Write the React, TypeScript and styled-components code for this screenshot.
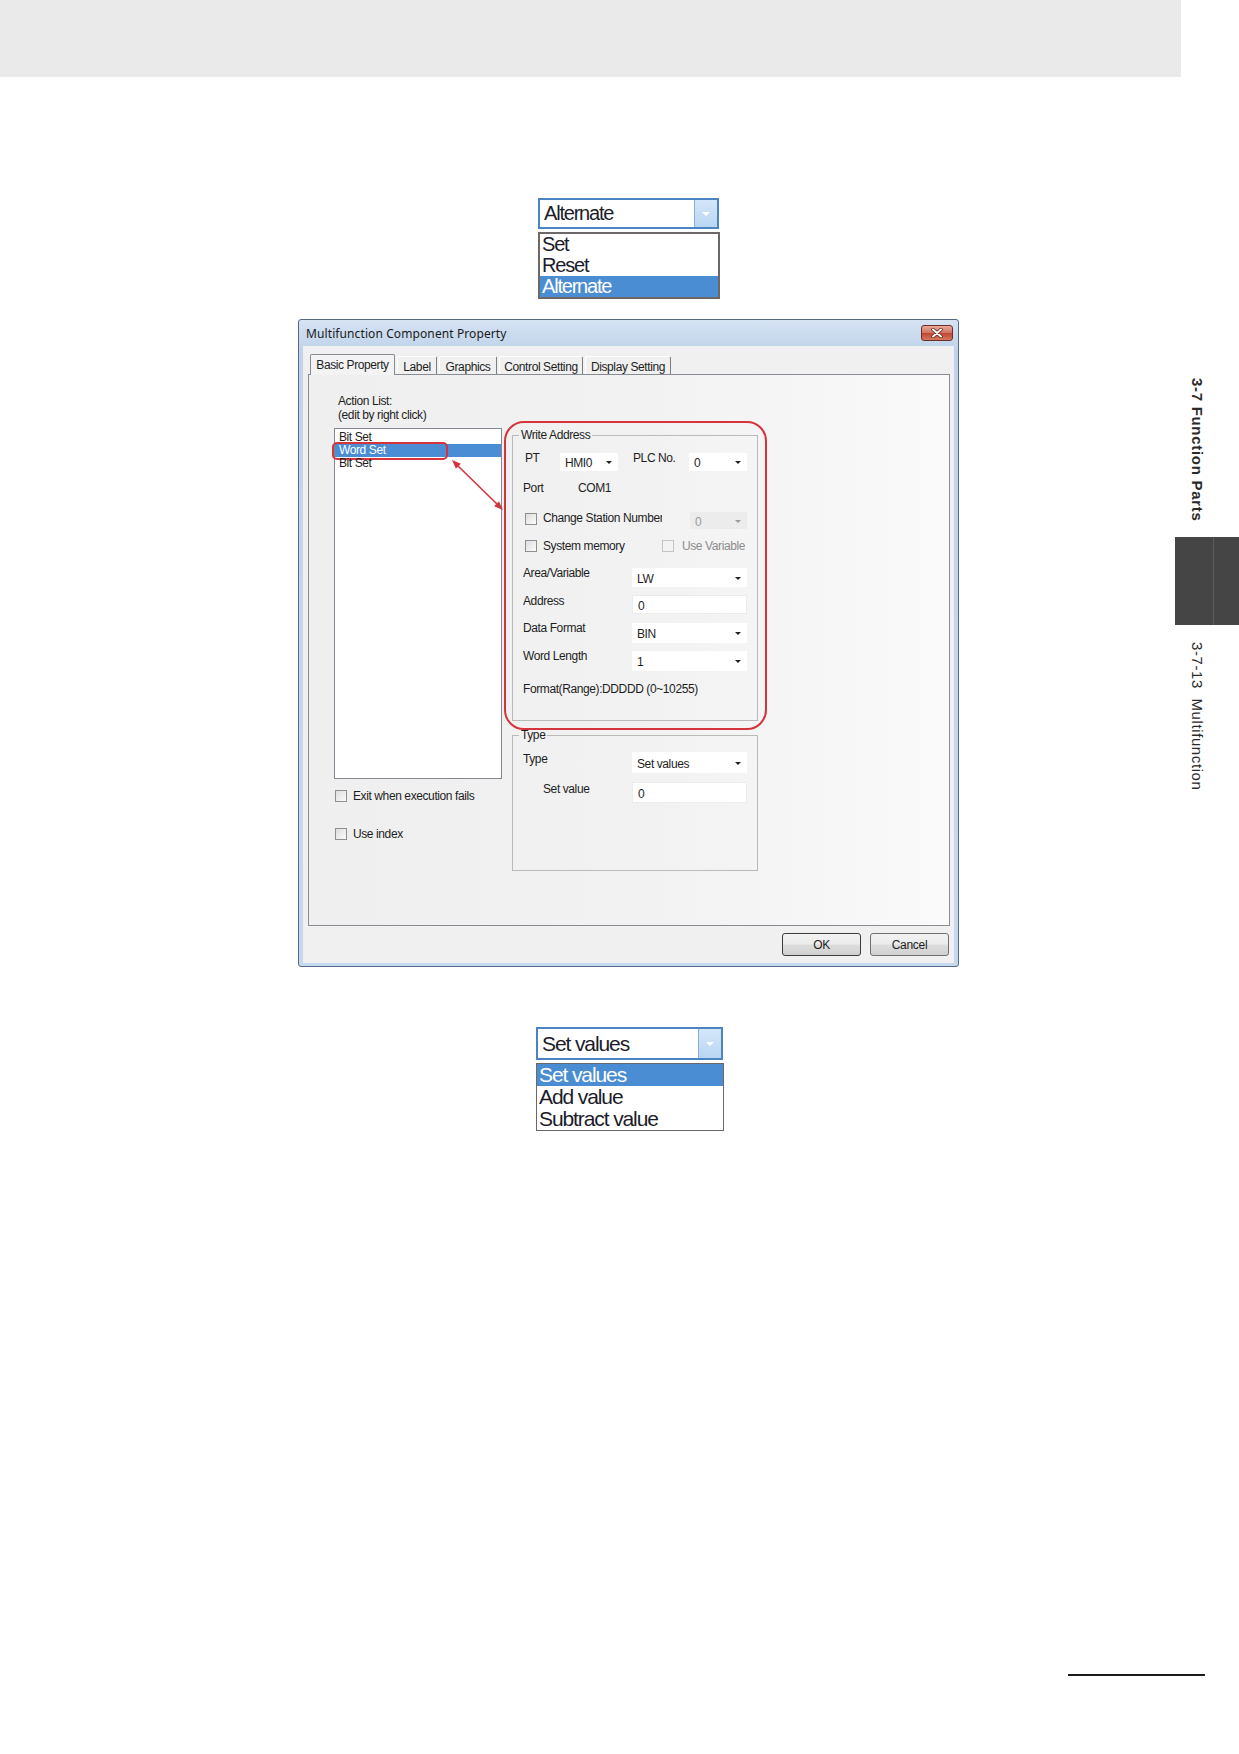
import React from 'react';
import styled, { createGlobalStyle } from 'styled-components';

const GlobalStyle = createGlobalStyle`
  html, body {
    margin: 0;
    padding: 0;
    background: #ffffff;
  }
  body {
    font-family: "Liberation Sans", Arial, sans-serif;
    color: #1d1d1d;
  }
`;

const Page = styled.div`
  width: 1239px;
  height: 1754px;
  display: flex;
  flex-direction: column;
  overflow: hidden;
`;

const HeaderBand = styled.header`
  width: 1181px;
  height: 77px;
  flex-shrink: 0;
  background: #eaeaea;
`;

const Body = styled.div`
  display: flex;
`;

const Main = styled.main`
  width: 1175px;
  display: flex;
  flex-direction: column;
`;

/* ---------- chapter rail on the right edge ---------- */

const Rail = styled.aside`
  width: 64px;
  padding-top: 301px;
  display: flex;
  flex-direction: column;
`;

const RailText = styled.div<{ $bold?: boolean }>`
  writing-mode: vertical-rl;
  white-space: nowrap;
  margin-left: 13px;
  width: 18px;
  line-height: 18px;
  font-family: "Liberation Sans", Arial, sans-serif;
  font-size: 15px;
  font-weight: ${p => (p.$bold ? 700 : 400)};
  letter-spacing: ${p => (p.$bold ? 0.7 : 0.6)}px;
  color: #2a2a2a;
`;

const RailBlock = styled.div`
  width: 64px;
  height: 88px;
  margin: 16px 0 17px;
  background: linear-gradient(
    to right,
    #454545 38px,
    #5e5e5e 38px,
    #5e5e5e 39px,
    #454545 39px
  );
`;

const Footer = styled.footer`
  margin-top: auto;
  padding: 0 0 78px 1068px;
`;

const FooterRule = styled.div`
  width: 137px;
  height: 2px;
  background: #1c1c1c;
`;

/* ---------- enlarged drop-down lists ---------- */

const DropWrap = styled.div<{ $left: number; $top: number }>`
  margin: ${p => p.$top}px 0 0 ${p => p.$left}px;
  font-family: "Liberation Sans", Arial, sans-serif;
  color: #1c1c2a;
`;

const BigCombo = styled.div<{ $w: number; $h: number; $fs: number; $ls: number }>`
  width: ${p => p.$w}px;
  height: ${p => p.$h}px;
  box-sizing: border-box;
  display: flex;
  border: 2px solid #4a84c2;
  background: #ffffff;
  font-size: ${p => p.$fs}px;
  letter-spacing: ${p => p.$ls}px;
`;

const BigComboText = styled.span`
  flex: 1;
  display: flex;
  align-items: center;
  padding-left: 4px;
`;

const BigComboButton = styled.span`
  width: 22px;
  display: flex;
  align-items: center;
  justify-content: center;
  border-left: 1px solid #86b0dc;
  background: linear-gradient(#d4e7f9, #b9d6f2);

  &::after {
    content: '';
    border-left: 4px solid transparent;
    border-right: 4px solid transparent;
    border-top: 4px solid #ffffff;
  }
`;

const BigOptions = styled.ul<{ $w: number; $fs: number; $ls: number; $bw: number }>`
  width: ${p => p.$w}px;
  box-sizing: border-box;
  margin: 3px 0 0;
  padding: 0;
  list-style: none;
  border: ${p => p.$bw}px solid #6d6868;
  background: #ffffff;
  font-size: ${p => p.$fs}px;
  letter-spacing: ${p => p.$ls}px;
`;

const BigOption = styled.li<{ $h: number; $active?: boolean }>`
  height: ${p => p.$h}px;
  line-height: ${p => p.$h}px;
  padding-left: 2px;
  background: ${p => (p.$active ? '#4b8dd2' : 'transparent')};
  color: ${p => (p.$active ? '#ffffff' : 'inherit')};
`;

type DropProps = {
  left: number;
  top: number;
  width: number;
  height: number;
  fontSize: number;
  spacing: number;
  itemHeight: number;
  border: number;
  value: string;
  options: string[];
};

const DropDemo = ({ left, top, width, height, fontSize, spacing, itemHeight, border, value, options }: DropProps) => (
  <DropWrap $left={left} $top={top}>
    <BigCombo $w={width} $h={height} $fs={fontSize} $ls={spacing}>
      <BigComboText>{value}</BigComboText>
      <BigComboButton />
    </BigCombo>
    <BigOptions $w={width + 1} $fs={fontSize} $ls={spacing} $bw={border}>
      {options.map(o => (
        <BigOption key={o} $h={itemHeight} $active={o === value}>
          {o}
        </BigOption>
      ))}
    </BigOptions>
  </DropWrap>
);

/* ---------- property dialog ---------- */

const Dialog = styled.section`
  width: 661px;
  margin: 20px 0 0 298px;
  box-sizing: border-box;
  padding: 0 4px 3px;
  border: 1px solid #56698a;
  border-radius: 3px;
  background: linear-gradient(#d5e3f3, #c0d3ea 30px, #c6d8ee);
  font-family: "Liberation Sans", Arial, sans-serif;
  font-size: 12px;
  letter-spacing: -0.4px;
  color: #1e1e1e;
`;

const TitleBar = styled.div`
  height: 26px;
  display: flex;
  align-items: center;
  justify-content: space-between;
  padding: 0 1px 0 3px;
`;

const Title = styled.span`
  font-family: "Noto Sans", "Liberation Sans", sans-serif;
  font-size: 12px;
  letter-spacing: 0.1px;
  color: #1a1a1a;
`;

const CloseButton = styled.span`
  width: 32px;
  height: 16px;
  box-sizing: border-box;
  display: flex;
  align-items: center;
  justify-content: center;
  border: 1px solid #6e2d27;
  border-radius: 3px;
  background: linear-gradient(#eaa898, #d17562 48%, #c04630 52%, #d5795f);
`;

const Client = styled.div`
  display: flex;
  flex-direction: column;
  padding: 8px 4px 7px 5px;
  background: #f0f0f0;
`;

const TabStrip = styled.div`
  position: relative;
  z-index: 1;
  height: 20px;
  display: flex;
  align-items: flex-end;
  padding-left: 2px;
`;

const Tab = styled.div<{ $w: number; $active?: boolean }>`
  width: ${p => p.$w}px;
  height: ${p => (p.$active ? 21 : 18)}px;
  margin-left: ${p => (p.$active ? 0 : 2)}px;
  margin-bottom: ${p => (p.$active ? -1 : 0)}px;
  box-sizing: border-box;
  display: flex;
  align-items: center;
  justify-content: center;
  border: 1px solid;
  border-bottom: none;
  border-color: ${p => (p.$active ? '#898c95' : '#ffffff #7d7d7d #ffffff #ffffff')};
  border-radius: 2px 2px 0 0;
  background: ${p => (p.$active ? '#f3f3f3' : 'transparent')};
  padding-top: ${p => (p.$active ? 0 : 2)}px;
`;

const Panel = styled.div`
  position: relative;
  height: 552px;
  box-sizing: border-box;
  display: flex;
  gap: 2px;
  padding: 19px 0 0 25px;
  border: 1px solid #898c95;
  background: linear-gradient(to right, #efefef, #f2f2f2 55%, #fafafa);
`;

const LeftCol = styled.div`
  width: 168px;
  display: flex;
  flex-direction: column;
`;

const ListCaption = styled.div`
  line-height: 14px;
  padding-left: 4px;
`;

const ActionList = styled.ul`
  height: 351px;
  box-sizing: border-box;
  margin: 6px 0 0;
  padding: 2px 0 0;
  list-style: none;
  border: 1px solid #828790;
  background: #ffffff;
`;

const ActionItem = styled.li<{ $active?: boolean }>`
  position: relative;
  height: 13px;
  line-height: 13px;
  padding-left: 4px;
  background: ${p => (p.$active ? '#4a8dd4' : 'transparent')};
  color: ${p => (p.$active ? '#ffffff' : 'inherit')};
`;

const CalloutRing = styled.span`
  position: absolute;
  top: -2px;
  left: -3px;
  width: 116px;
  height: 18px;
  box-sizing: border-box;
  border: 2px solid #d6343d;
  border-radius: 5px;
`;

const CheckRow = styled.div<{ $top: number }>`
  height: 14px;
  margin-top: ${p => p.$top}px;
  display: flex;
  align-items: center;
  gap: 6px;
  padding-left: 1px;
`;

const Box = styled.span<{ $disabled?: boolean; $mt?: number; $ml?: number }>`
  width: 12px;
  height: 12px;
  flex-shrink: 0;
  box-sizing: border-box;
  margin-top: ${p => p.$mt ?? 0}px;
  margin-left: ${p => p.$ml ?? 0}px;
  border: 1px solid ${p => (p.$disabled ? '#c4c4c4' : '#8e8f8f')};
  background: ${p => (p.$disabled ? '#f3f3f3' : 'linear-gradient(135deg, #dedede, #fbfbfb)')};
`;

const RightCol = styled.div`
  width: 263px;
  margin-top: 27px;
  display: flex;
  flex-direction: column;
`;

const HighlightRing = styled.div`
  box-sizing: border-box;
  padding: 5px 7px 7px 6px;
  border: 2px solid #d6343d;
  border-radius: 20px;
`;

const Group = styled.fieldset<{ $h?: number; $indent?: number; $pt?: number; $mt?: number }>`
  margin: ${p => p.$mt ?? 0}px 0 0 ${p => p.$indent ?? 0}px;
  padding: ${p => p.$pt ?? 9}px 10px 21px;
  min-width: 0;
  box-sizing: border-box;
  ${p => (p.$h ? `height: ${p.$h}px;` : '')}
  border: 1px solid #b9b9b9;
`;

const GroupTitle = styled.legend`
  margin-left: -4px;
  padding: 0 2px;
  line-height: 14px;
`;

const Row = styled.div<{ $h: number }>`
  height: ${p => p.$h}px;
  display: flex;
  align-items: flex-start;
`;

const FieldLabel = styled.span<{ $w?: number; $pt?: number; $ml?: number; $pl?: number; $muted?: boolean }>`
  ${p => (p.$w ? `width: ${p.$w}px;` : '')}
  flex-shrink: 0;
  box-sizing: border-box;
  padding-top: ${p => p.$pt ?? 0}px;
  padding-left: ${p => p.$pl ?? 0}px;
  margin-left: ${p => p.$ml ?? 0}px;
  line-height: 14px;
  white-space: nowrap;
  overflow: hidden;
  color: ${p => (p.$muted ? '#8c8c8c' : 'inherit')};
`;

const Select = styled.div<{ $w: number; $h: number; $mt?: number; $ml?: number; $disabled?: boolean }>`
  position: relative;
  width: ${p => p.$w}px;
  height: ${p => p.$h}px;
  margin-top: ${p => p.$mt ?? 0}px;
  margin-left: ${p => p.$ml ?? 0}px;
  box-sizing: border-box;
  display: flex;
  align-items: center;
  padding: 2px 0 0 5px;
  background: ${p => (p.$disabled ? '#ececec' : '#ffffff')};
  color: ${p => (p.$disabled ? '#9a9a9a' : 'inherit')};

  &::after {
    content: '';
    position: absolute;
    right: 6px;
    top: 50%;
    margin-top: -1px;
    border-left: 3px solid transparent;
    border-right: 3px solid transparent;
    border-top: 3px solid ${p => (p.$disabled ? '#9a9a9a' : '#222222')};
  }
`;

const TextBox = styled.div<{ $w: number; $h: number; $mt?: number }>`
  width: ${p => p.$w}px;
  height: ${p => p.$h}px;
  margin-top: ${p => p.$mt ?? 0}px;
  box-sizing: border-box;
  display: flex;
  align-items: center;
  padding: 2px 0 0 5px;
  border: 1px solid #ececec;
  background: #ffffff;
`;

const Arrow = styled.svg`
  position: absolute;
  left: 139px;
  top: 81px;
  overflow: visible;
`;

const ButtonRow = styled.div`
  display: flex;
  justify-content: flex-end;
  gap: 9px;
  margin-top: 7px;
  padding-right: 1px;
`;

const PushButton = styled.button<{ $default?: boolean }>`
  width: 79px;
  height: 23px;
  padding: 0;
  border: 1px solid ${p => (p.$default ? '#3c3c3c' : '#707070')};
  border-radius: 3px;
  background: linear-gradient(#f3f3f3, #ebebeb 48%, #dddddd 52%, #d0d0d0);
  font-family: "Liberation Sans", Arial, sans-serif;
  font-size: 12px;
  letter-spacing: -0.3px;
  color: #1e1e1e;
`;

const tabs = [
  { name: 'Basic Property', w: 85 },
  { name: 'Label', w: 40 },
  { name: 'Graphics', w: 58 },
  { name: 'Control Setting', w: 84 },
  { name: 'Display Setting', w: 86 },
];

const PropertyDialog = () => (
  <Dialog>
    <TitleBar>
      <Title>Multifunction Component Property</Title>
      <CloseButton>
        <svg width="12" height="10" viewBox="0 0 12 10">
          <path d="M2 1.5 L10 8.5 M10 1.5 L2 8.5" stroke="#5a1a12" strokeWidth="3.4" strokeLinecap="round" />
          <path d="M2 1.5 L10 8.5 M10 1.5 L2 8.5" stroke="#ffffff" strokeWidth="2" strokeLinecap="round" />
        </svg>
      </CloseButton>
    </TitleBar>

    <Client>
      <TabStrip>
        {tabs.map((t, i) => (
          <Tab key={t.name} $w={t.w} $active={i === 0}>
            {t.name}
          </Tab>
        ))}
      </TabStrip>

      <Panel>
        <LeftCol>
          <ListCaption>
            Action List:
            <br />
            (edit by right click)
          </ListCaption>
          <ActionList>
            <ActionItem>Bit Set</ActionItem>
            <ActionItem $active>
              Word Set
              <CalloutRing />
            </ActionItem>
            <ActionItem>Bit Set</ActionItem>
          </ActionList>
          <CheckRow $top={10}>
            <Box />
            Exit when execution fails
          </CheckRow>
          <CheckRow $top={24}>
            <Box />
            Use index
          </CheckRow>
        </LeftCol>

        <RightCol>
          <HighlightRing>
            <Group>
              <GroupTitle>Write Address</GroupTitle>
              <Row $h={30}>
                <FieldLabel $w={37} $pl={2}>PT</FieldLabel>
                <Select $w={58} $h={18} $mt={2}>HMI0</Select>
                <FieldLabel $w={56} $ml={15}>PLC No.</FieldLabel>
                <Select $w={58} $h={18} $mt={2}>0</Select>
              </Row>
              <Row $h={28}>
                <FieldLabel $w={55}>Port</FieldLabel>
                <FieldLabel>COM1</FieldLabel>
              </Row>
              <Row $h={27}>
                <Box $mt={4} $ml={2} />
                <FieldLabel $w={119} $pt={2} $ml={6}>Change Station Number</FieldLabel>
                <Select $w={57} $h={17} $mt={3} $ml={28} $disabled>0</Select>
              </Row>
              <Row $h={28}>
                <Box $mt={4} $ml={2} />
                <FieldLabel $w={119} $pt={3} $ml={6}>System memory</FieldLabel>
                <Box $mt={4} $disabled />
                <FieldLabel $pt={3} $ml={8} $muted>Use Variable</FieldLabel>
              </Row>
              <Row $h={27}>
                <FieldLabel $w={109} $pt={2}>Area/Variable</FieldLabel>
                <Select $w={115} $h={19} $mt={4}>LW</Select>
              </Row>
              <Row $h={28}>
                <FieldLabel $w={109} $pt={3}>Address</FieldLabel>
                <TextBox $w={116} $h={19} $mt={4}>0</TextBox>
              </Row>
              <Row $h={28}>
                <FieldLabel $w={109} $pt={2}>Data Format</FieldLabel>
                <Select $w={115} $h={20} $mt={4}>BIN</Select>
              </Row>
              <Row $h={32}>
                <FieldLabel $w={109} $pt={2}>Word Length</FieldLabel>
                <Select $w={115} $h={20} $mt={4}>1</Select>
              </Row>
              <Row $h={20}>
                <FieldLabel $pt={3}>Format(Range):DDDDD (0~10255)</FieldLabel>
              </Row>
            </Group>
          </HighlightRing>

          <Group $h={143} $indent={8} $pt={10} $mt={-2} style={{ width: 246 }}>
            <GroupTitle>Type</GroupTitle>
            <Row $h={30}>
              <FieldLabel $w={109}>Type</FieldLabel>
              <Select $w={115} $h={21}>Set values</Select>
            </Row>
            <Row $h={30}>
              <FieldLabel $w={109} $pl={20}>Set value</FieldLabel>
              <TextBox $w={116} $h={21}>0</TextBox>
            </Row>
          </Group>
        </RightCol>

        <Arrow width="60" height="60" viewBox="0 0 60 60">
          <line x1="8" y1="8" x2="51" y2="50" stroke="#d6343d" strokeWidth="1.6" />
          <polygon points="4,4 12.9,7.8 7.9,12.8" fill="#d6343d" />
          <polygon points="55,54 51,45.2 46.1,50.2" fill="#d6343d" />
        </Arrow>
      </Panel>

      <ButtonRow>
        <PushButton $default>OK</PushButton>
        <PushButton>Cancel</PushButton>
      </ButtonRow>
    </Client>
  </Dialog>
);

export default function App() {
  return (
    <>
      <GlobalStyle />
      <Page>
        <HeaderBand />
        <Body>
          <Main>
            <DropDemo
              left={538}
              top={121}
              width={181}
              height={31}
              fontSize={20}
              spacing={-1.2}
              itemHeight={21}
              border={2}
              value="Alternate"
              options={['Set', 'Reset', 'Alternate']}
            />
            <PropertyDialog />
            <DropDemo
              left={536}
              top={60}
              width={187}
              height={33}
              fontSize={21}
              spacing={-1.1}
              itemHeight={22}
              border={1}
              value="Set values"
              options={['Set values', 'Add value', 'Subtract value']}
            />
          </Main>
          <Rail>
            <RailText $bold>3-7 Function Parts</RailText>
            <RailBlock />
            <RailText>3-7-13&nbsp; Multifunction</RailText>
          </Rail>
        </Body>
        <Footer>
          <FooterRule />
        </Footer>
      </Page>
    </>
  );
}
